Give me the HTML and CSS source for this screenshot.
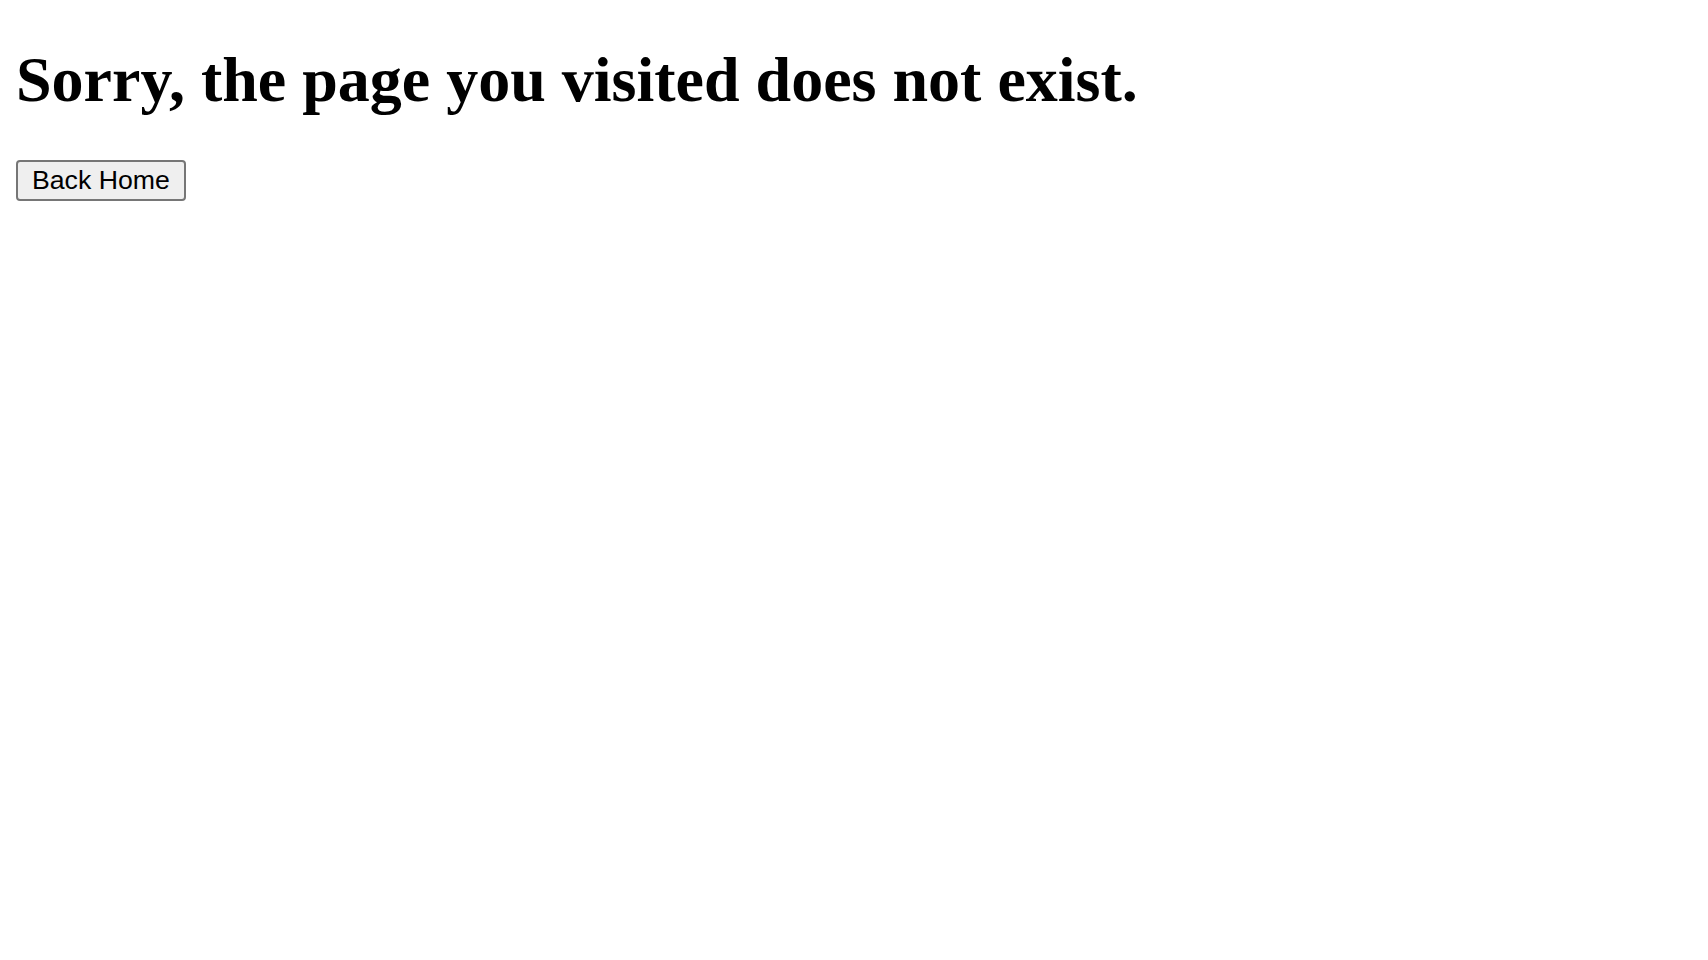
FILE: index.html
```html
<!DOCTYPE html>
<html>
<head>
<meta charset="utf-8">
<link rel="stylesheet" href="styles.css">
</head>
<body class="page">
<h1 class="title">Sorry, the page you visited does not exist.</h1>
<button class="back-btn" type="button">Back Home</button>
</body>
</html>
```
FILE: styles.css
```css
html { background: #fff; }
.page {
  margin: 0 16px 16px;
  padding-top: 1px;
  font-family: "Liberation Serif", "Times New Roman", serif;
  color: #000;
}
.title {
  font-size: 64px;
  font-weight: bold;
  margin: 42px 0 42.88px;
  line-height: normal;
}
.back-btn {
  font-family: "Liberation Sans", Arial, sans-serif;
  font-size: 26.67px;
  line-height: normal;
  padding: 3px 14px;
  border: 2px solid #767676;
  border-radius: 4px;
  background: #efefef;
  color: #000;
  margin: 0;
}
```
